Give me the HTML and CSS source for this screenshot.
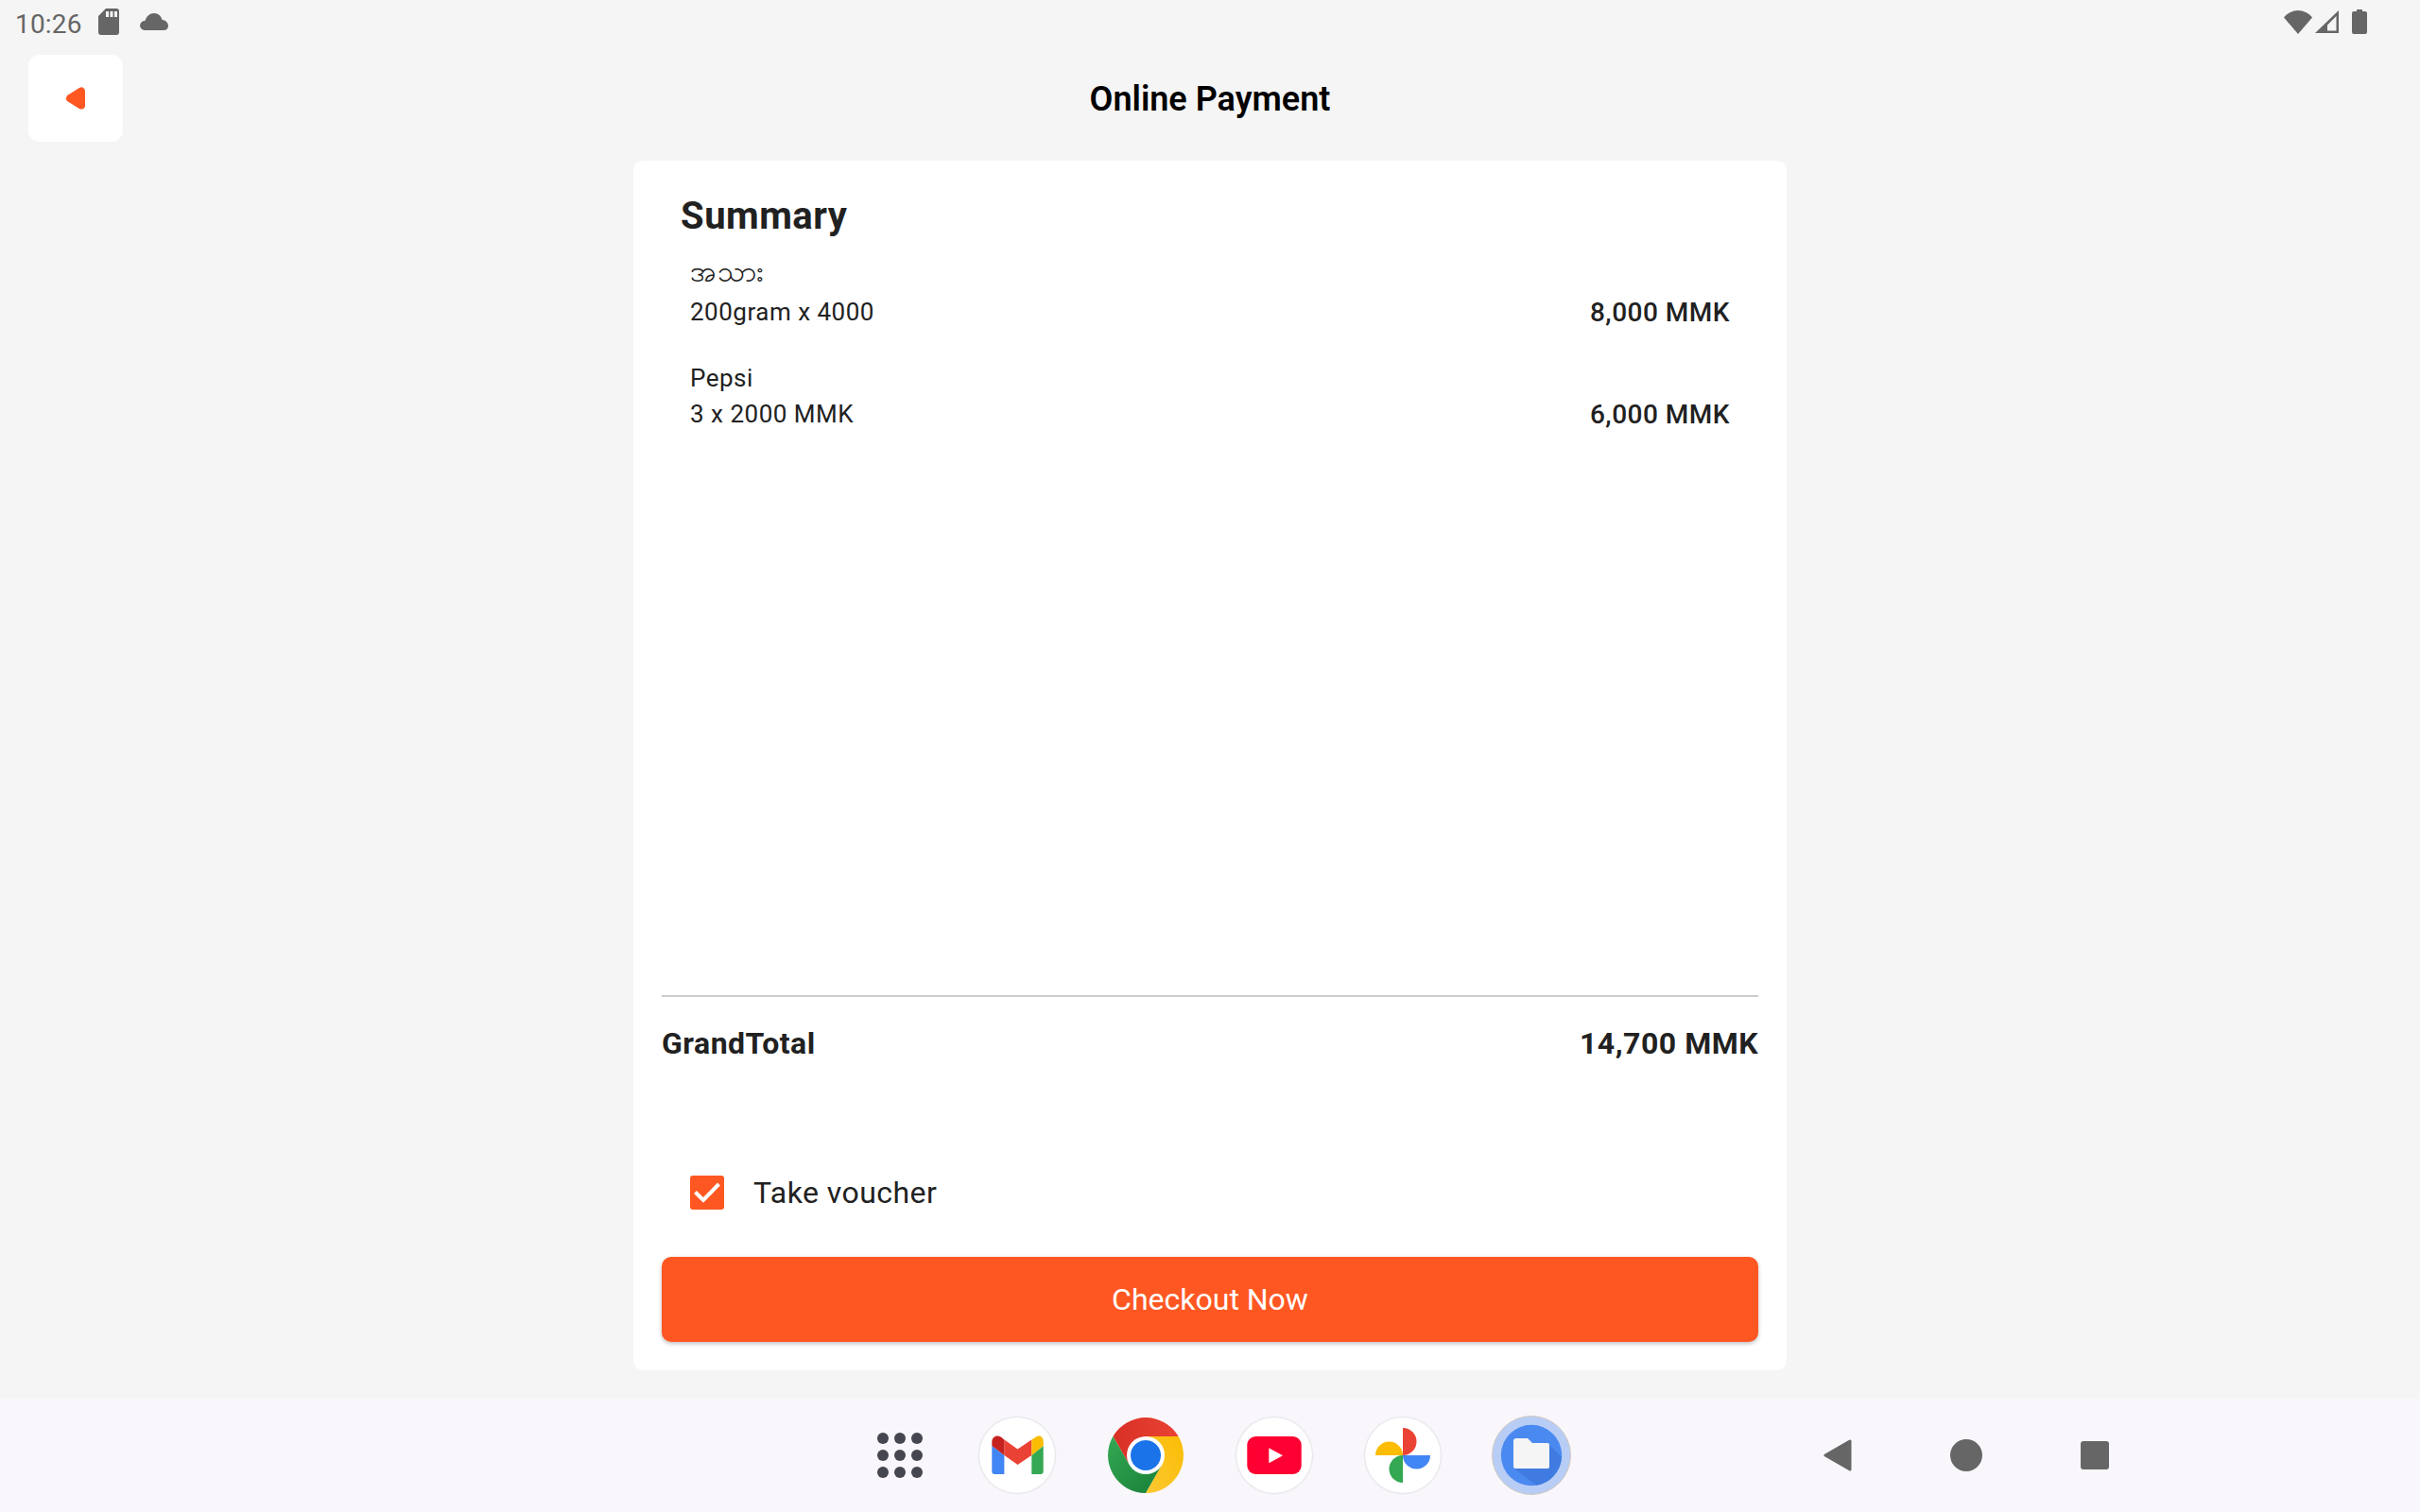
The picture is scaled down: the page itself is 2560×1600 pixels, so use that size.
FILE: index.html
```html
<!DOCTYPE html>
<html lang="en">

<head>
    <meta charset="UTF-8">
    <meta name="viewport" content="width=device-width, initial-scale=1.0">
    <title>Online Payment</title>
    <link rel="stylesheet" href="styles.css">
</head>

<body>
    <div class="status-bar">
        <span class="status-time">10:26</span>
        <!-- sd card -->
        <svg class="icon-sd" viewBox="0 0 22 28">
            <path d="M8 0H19a3 3 0 0 1 3 3V25a3 3 0 0 1-3 3H3a3 3 0 0 1-3-3V8Z" fill="#666" />
            <rect x="8" y="3" width="3" height="6" fill="#f5f5f5" />
            <rect x="12.500" y="3" width="3" height="6" fill="#f5f5f5" />
            <rect x="17" y="3" width="3" height="6" fill="#f5f5f5" />
        </svg>
        <!-- cloud -->
        <svg class="icon-cloud" viewBox="0 0 30 18">
            <path d="M5 18a5 5 0 0 1-4.900-5.500A5 5 0 0 1 5.500 8C7 3 10.500 0 15 0c4.500 0 7.500 3 8.500 7 3.500.3 6.500 2.800 6.500 6.500 0 2.500-2 4.500-4.500 4.500Z" fill="#666" />
        </svg>
        <div class="status-right">
            <svg class="icon-wifi" viewBox="0 0 30 25">
                <path d="M0 7.500C4 2.800 9.300 0 15 0s11 2.800 15 7.500L15 25Z" fill="#666" />
            </svg>
            <svg class="icon-signal" viewBox="0 0 25 24">
                <path d="M25 0V24H0ZM22.500 6 13 15.500V21.500H22.500Z" fill="#666" fill-rule="evenodd" />
            </svg>
            <svg class="icon-battery" viewBox="0 0 16 26">
                <path d="M5 0H11V2H14a2 2 0 0 1 2 2V24a2 2 0 0 1-2 2H2a2 2 0 0 1-2-2V4a2 2 0 0 1 2-2H5Z" fill="#666" />
            </svg>
        </div>
    </div>

    <header class="app-bar">
        <button class="back-btn" type="button">
            <svg viewBox="0 0 20 24" width="20" height="24">
                <path d="M4 12 16 4.500V19.500Z" fill="#ff5722" stroke="#ff5722" stroke-width="8" stroke-linejoin="round" />
            </svg>
        </button>
        <h1 class="app-title">Online Payment</h1>
    </header>

    <main class="page">
        <section class="card">
            <h2 class="summary-title">Summary</h2>

            <div class="item-row item-first">
                <div class="item-info">
                    <div class="item-name item-name-mm">အသား</div>
                    <div class="item-detail">200gram x 4000</div>
                </div>
                <div class="item-price">8,000 MMK</div>
            </div>

            <div class="item-row item-second">
                <div class="item-info">
                    <div class="item-name">Pepsi</div>
                    <div class="item-detail">3 x 2000 MMK</div>
                </div>
                <div class="item-price">6,000 MMK</div>
            </div>

            <div class="spacer"></div>

            <div class="total-row">
                <span>GrandTotal</span>
                <span>14,700 MMK</span>
            </div>

            <label class="voucher-row">
                <span class="checkbox">
                    <svg viewBox="0 0 36 36" width="36" height="36">
                        <path d="M5.500 17.500 14 26 30.500 9" fill="none" stroke="#fff" stroke-width="4" />
                    </svg>
                </span>
                <span>Take voucher</span>
            </label>

            <button class="checkout-btn" type="button">Checkout Now</button>
        </section>
    </main>

    <nav class="dock">
        <div class="dock-apps">
            <div class="dock-slot dock-slot-grid">
                <div class="app-grid">
                    <i></i><i></i><i></i><i></i><i></i><i></i><i></i><i></i><i></i>
                </div>
            </div>

            <!-- gmail -->
            <div class="dock-slot">
                <svg class="dock-icon dock-icon-round" viewBox="0 0 80 80">
                    <circle cx="40" cy="40" r="40" fill="#fff" />
                    <path d="M13.300 30 26.400 40V60H16.300a3 3 0 0 1-3-3Z" fill="#4285f4" />
                    <path d="M67.700 30 55.300 40V60H64.700a3 3 0 0 0 3-3Z" fill="#34a853" />
                    <path d="M26.400 23.500 40.500 33.500 55.300 23.500V40L40.500 50 26.400 40Z" fill="#ea4335" />
                    <path d="M13.300 30V26C13.300 20 20 17 25 22.500L26.400 23.500V40Z" fill="#c5221f" />
                    <path d="M55.300 23.500 60 20.500C63 18 67.700 20 67.700 25V30L55.300 40Z" fill="#fbbc04" />
                </svg>
            </div>

            <!-- chrome -->
            <div class="dock-slot">
                <svg class="dock-icon" viewBox="0 0 80 80">
                    <defs>
                        <linearGradient id="chromeRed" x1="0" y1="0" x2="1" y2="0">
                            <stop offset="0" stop-color="#d93025" />
                            <stop offset="1" stop-color="#ea4335" />
                        </linearGradient>
                        <linearGradient id="chromeGreen" x1="0" y1="0" x2="1" y2="1">
                            <stop offset="0" stop-color="#34a853" />
                            <stop offset="1" stop-color="#188038" />
                        </linearGradient>
                        <linearGradient id="chromeYellow" x1="1" y1="0" x2="0" y2="1">
                            <stop offset="0" stop-color="#fbbc04" />
                            <stop offset="1" stop-color="#fcc934" />
                        </linearGradient>
                    </defs>
                    <path d="M74.600 20A40 40 0 0 0 5.400 20L22.700 50 40 20Z" fill="url(#chromeRed)" />
                    <path d="M5.400 20A40 40 0 0 0 40 80L57.300 50H22.700Z" fill="url(#chromeGreen)" />
                    <path d="M40 80A40 40 0 0 0 74.600 20H40L57.300 50Z" fill="url(#chromeYellow)" />
                    <circle cx="40" cy="40" r="20" fill="#fff" />
                    <circle cx="40" cy="40" r="16" fill="#1a73e8" />
                </svg>
            </div>

            <!-- youtube -->
            <div class="dock-slot">
                <svg class="dock-icon dock-icon-round" viewBox="0 0 80 80">
                    <circle cx="40" cy="40" r="40" fill="#fff" />
                    <rect x="11.300" y="20" width="57.400" height="40" rx="9" fill="#ff0033" />
                    <path d="M34.300 32.300 49 40.300 34.300 48.300Z" fill="#fff" />
                </svg>
            </div>

            <!-- photos -->
            <div class="dock-slot">
                <svg class="dock-icon dock-icon-round" viewBox="0 0 80 80">
                    <circle cx="40" cy="40" r="40" fill="#fff" />
                    <path d="M11 40A14.500 14.500 0 0 1 40 40Z" fill="#fbbc04" />
                    <path d="M40 11A14.500 14.500 0 0 1 40 40Z" fill="#ea4335" />
                    <path d="M40 40H69A14.500 14.500 0 0 1 40 40Z" fill="#4285f4" />
                    <path d="M40 69A14.500 14.500 0 0 1 40 40Z" fill="#34a853" />
                </svg>
            </div>

            <!-- files, open app has the ring -->
            <div class="dock-slot">
                <svg class="dock-icon-files" viewBox="0 0 84 84">
                    <circle cx="42" cy="42" r="41.500" fill="#b8cdf6" stroke="#cfc8bf" stroke-width="1" />
                    <circle cx="42" cy="42" r="32.200" fill="#4a8af0" />
                    <path d="M60 30 74 44A32.200 32.200 0 0 1 47 73.800L24 56Z" fill="#3f7be0" />
                    <path d="M26 24H38L43 29H59a2 2 0 0 1 2 2V54a2 2 0 0 1-2 2H25a2 2 0 0 1-2-2V27a3 3 0 0 1 3-3Z" fill="#f5f5f5" />
                </svg>
            </div>
        </div>

        <div class="dock-nav">
            <div class="dock-slot">
                <svg viewBox="0 0 30 34" width="30" height="34">
                    <path d="M2 17 28 2V32Z" fill="#666" stroke="#666" stroke-width="3" stroke-linejoin="round" />
                </svg>
            </div>
            <div class="dock-slot"><span class="nav-home"></span></div>
            <div class="dock-slot"><span class="nav-recent"></span></div>
        </div>
    </nav>
</body>

</html>
```

FILE: styles.css
```css
:root {
    --orange: #ff5722;
    --text: #212121;
    --icon-grey: #666;
}

* {
    box-sizing: border-box;
}

body {
    display: flex;
    flex-direction: column;
    height: 100vh;
    margin: 0;
    background-color: #f5f5f5;
    color: var(--text);
    font-family: Roboto, "Noto Sans", sans-serif;
}

/* status bar */
.status-bar {
    display: flex;
    align-items: center;
    height: 48px;
    padding: 0 56px 0 16px;
    flex-shrink: 0;
}

.status-time {
    font-size: 28px;
    letter-spacing: 0.2px;
    color: var(--icon-grey);
    width: 88px;
    padding-top: 2px;
}

.icon-sd {
    width: 22px;
    height: 28px;
    margin-top: -2px;
}

.icon-cloud {
    width: 30px;
    height: 18px;
    margin-left: 22px;
    margin-top: -2px;
}

.status-right {
    display: flex;
    align-items: center;
    margin-left: auto;
    margin-top: -2px;
}

.icon-wifi {
    width: 30px;
    height: 25px;
}

.icon-signal {
    width: 25px;
    height: 24px;
    margin-left: 3px;
}

.icon-battery {
    width: 16px;
    height: 26px;
    margin-left: 14px;
}

/* app bar */
.app-bar {
    display: flex;
    align-items: center;
    position: relative;
    height: 122px;
    padding: 2px 30px 12px;
    flex-shrink: 0;
}

.back-btn {
    display: flex;
    align-items: center;
    justify-content: center;
    width: 100px;
    height: 92px;
    border: none;
    border-radius: 12px;
    background-color: #fff;
    padding: 0;
}

.app-title {
    position: absolute;
    left: 0;
    right: 0;
    top: 31px;
    margin: 0;
    text-align: center;
    font-size: 36px;
    line-height: 52px;
    font-weight: 600;
    color: #000;
}

/* card */
.page {
    display: flex;
    justify-content: center;
    flex: 1;
    min-height: 0;
    padding-bottom: 30px;
}

.card {
    display: flex;
    flex-direction: column;
    width: 1220px;
    padding: 31px 30px 30px;
    border-radius: 10px;
    background-color: #fff;
}

.summary-title {
    margin: 0;
    padding-left: 20px;
    font-size: 40px;
    line-height: 56px;
    font-weight: 700;
    letter-spacing: 0.5px;
}

.item-row {
    display: flex;
    justify-content: space-between;
    align-items: flex-end;
    padding: 0 30px;
    font-size: 26px;
    letter-spacing: 0.5px;
}

.item-first {
    margin-top: 8px;
}

.item-second {
    margin-top: 32px;
}

.item-name,
.item-detail {
    line-height: 38px;
}

.item-name-mm {
    font-size: 30px;
    line-height: 46px;
}

.item-price {
    font-size: 28px;
    font-weight: 500;
    line-height: 38px;
    margin-bottom: -1px;
}

.spacer {
    flex: 1;
}

.total-row {
    display: flex;
    justify-content: space-between;
    align-items: center;
    box-sizing: content-box;
    height: 97px;
    border-top: 2px solid #ccc;
    font-size: 32px;
    font-weight: 700;
    letter-spacing: 0.5px;
}

.voucher-row {
    display: flex;
    align-items: center;
    height: 36px;
    margin-top: 92px;
    padding-left: 30px;
    font-size: 32px;
    letter-spacing: 0.45px;
}

.checkbox {
    display: block;
    width: 36px;
    height: 36px;
    margin-right: 31px;
    border-radius: 3px;
    background-color: var(--orange);
}

.checkbox svg {
    display: block;
}

.checkout-btn {
    height: 90px;
    margin-top: 50px;
    border: none;
    border-radius: 10px;
    background-color: var(--orange);
    color: #fff;
    font-family: inherit;
    font-size: 32px;
    box-shadow: 0 2px 4px rgba(0, 0, 0, 0.25);
}

/* bottom dock */
.dock {
    display: flex;
    align-items: center;
    height: 120px;
    padding-left: 884px;
    background-color: #f9f7fc;
    flex-shrink: 0;
}

.dock-apps,
.dock-nav {
    display: flex;
}

.dock-nav {
    margin-left: 188px;
}

.dock-slot {
    display: flex;
    align-items: center;
    justify-content: center;
    width: 136px;
    height: 84px;
}

.dock-slot-grid {
    justify-content: flex-start;
    width: 124px;
    padding-left: 44px;
}

.dock-icon {
    width: 80px;
    height: 80px;
}

.dock-icon-round {
    filter: drop-shadow(0 0 1px rgba(0, 0, 0, 0.2));
}

.dock-icon-files {
    width: 84px;
    height: 84px;
}

.app-grid {
    display: grid;
    grid-template-columns: repeat(3, 12px);
    gap: 6px;
}

.app-grid i {
    width: 12px;
    height: 12px;
    border-radius: 50%;
    background-color: #45464f;
}

.nav-home {
    width: 34px;
    height: 34px;
    border-radius: 50%;
    background-color: var(--icon-grey);
}

.nav-recent {
    width: 30px;
    height: 30px;
    border-radius: 3px;
    background-color: var(--icon-grey);
}
```
